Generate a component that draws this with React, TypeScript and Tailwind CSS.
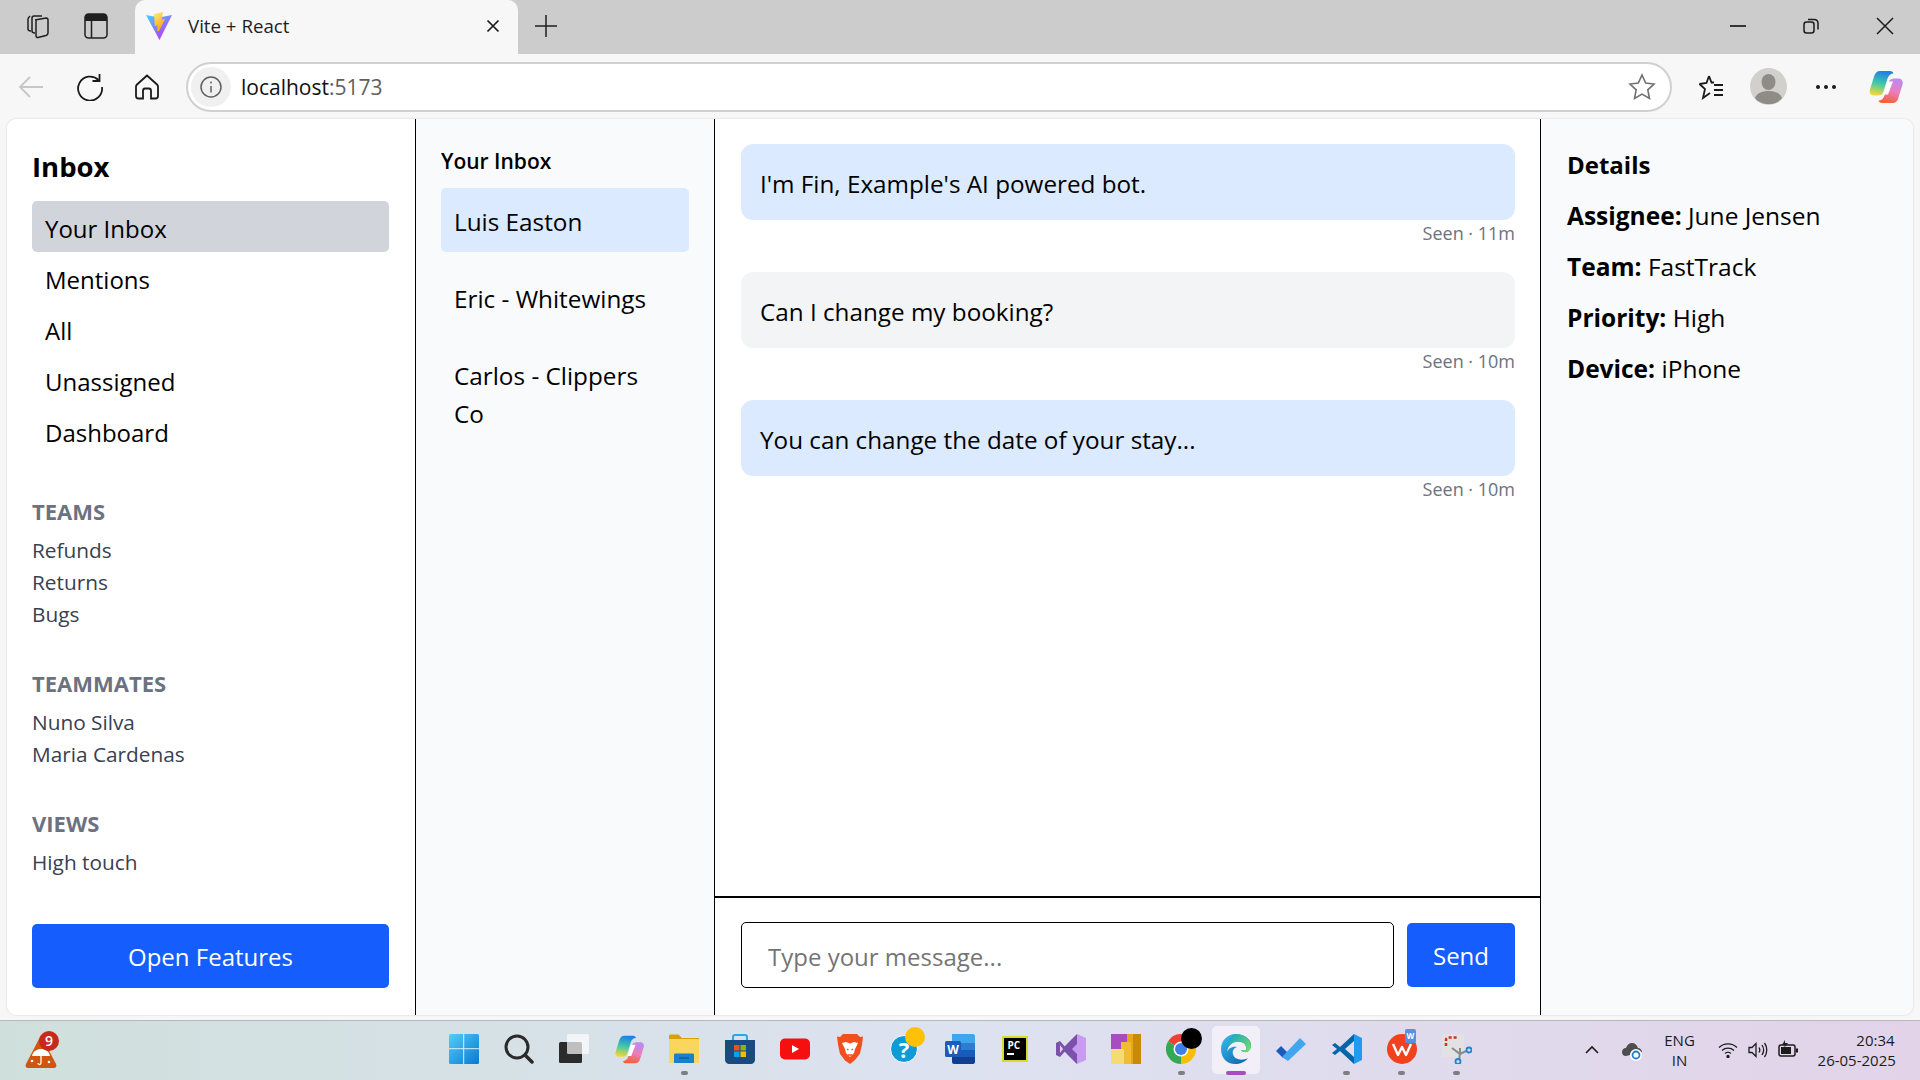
import React from "react";

const navItems = ["Your Inbox", "Mentions", "All", "Unassigned", "Dashboard"];

const sections = [
  { title: "TEAMS", items: ["Refunds", "Returns", "Bugs"], className: "mt-[40px]" },
  { title: "TEAMMATES", items: ["Nuno Silva", "Maria Cardenas"], className: "mt-[38px]" },
  { title: "VIEWS", items: ["High touch"], className: "mt-[38px]" },
];

const conversations = ["Luis Easton", "Eric - Whitewings", "Carlos - Clippers Co"];

const messages = [
  { text: "I'm Fin, Example's AI powered bot.", seen: "Seen · 11m", bg: "bg-[#dbeafe]" },
  { text: "Can I change my booking?", seen: "Seen · 10m", bg: "bg-[#f3f4f6]" },
  { text: "You can change the date of your stay...", seen: "Seen · 10m", bg: "bg-[#dbeafe]" },
];

const details = [
  { label: "Assignee:", value: "June Jensen" },
  { label: "Team:", value: "FastTrack" },
  { label: "Priority:", value: "High" },
  { label: "Device:", value: "iPhone" },
];

const CopilotLogo = ({ size = 36, id = "cp" }: { size?: number; id?: string }) => (
  <svg width={size} height={size} viewBox="0 0 36 36">
    <defs>
      <linearGradient id={`${id}A`} x1="0.5" y1="0" x2="0.3" y2="1">
        <stop offset="0" stopColor="#1f7fe6" />
        <stop offset="0.5" stopColor="#3fc8a8" />
        <stop offset="1" stopColor="#f9d835" />
      </linearGradient>
      <linearGradient id={`${id}B`} x1="0.7" y1="0" x2="0.4" y2="1">
        <stop offset="0" stopColor="#b98cf0" />
        <stop offset="0.5" stopColor="#ea7ec0" />
        <stop offset="1" stopColor="#f5602f" />
      </linearGradient>
    </defs>
    <path d="M12 2h10c2 0 3 1 3.500 2.500-3 0-5 2-6 5l-4 13c-1 3-3 4-6 4H6c-3.500 0-5-3-4-6l4-13C7 4 9 2 12 2z" fill={`url(#${id}A)`} />
    <path d="M24 34H14c-2 0-3-1-3.500-2.500 3 0 5-2 6-5l4-13c1-3 3-4 6-4h4c3.500 0 5 3 4 6l-4 13c-1 4-3 5.500-6.500 5.500z" fill={`url(#${id}B)`} />
    <path d="M19.500 12.500h5.500l-5 13h-4.500z" fill="#fff" />
  </svg>
);

const TabBar = () => (
  <div className="flex h-[54px] shrink-0 items-end bg-[#cccccc]">
    <div className="flex h-full w-[135px] items-center pb-[2px]">
      <svg className="ml-[25px]" width="26" height="26" viewBox="0 0 26 26" fill="none" stroke="#1f1f1f" strokeWidth="1.500">
        <path d="M10 7l11-2c1 0 2 .6 2 2v13c0 1-.6 2-2 2.500l-8 2c-1 .2-2-.5-2-2V9c0-1 0-2 1-2z" />
        <path d="M10 20c-2 0-3-1-3-2V5c0-1 1-2 2-2h8" />
        <path d="M6 18c-2 0-3-1-3-2V6c0-1 1-2 2-3" />
      </svg>
      <svg className="ml-[33px]" width="24" height="26" viewBox="0 0 24 26" fill="none">
        <rect x="1" y="1" width="22" height="24" rx="3.500" stroke="#1f1f1f" strokeWidth="1.500" />
        <path d="M1 4.500C1 2 2.500 1 4.500 1h15C21.500 1 23 2 23 4.500V8H1z" fill="#1f1f1f" />
        <path d="M7.500 8v17" stroke="#1f1f1f" strokeWidth="1.500" />
      </svg>
    </div>
    <div className="flex h-full w-[383px] items-center rounded-t-[10px] bg-[#f7f7f7] pb-[2px]">
      <svg className="ml-[11px]" width="26" height="30" viewBox="0 0 26 30">
        <defs>
          <linearGradient id="viteA" x1="0" y1="0" x2="0.7" y2="1">
            <stop offset="0" stopColor="#41d1ff" />
            <stop offset="1" stopColor="#bd34fe" />
          </linearGradient>
          <linearGradient id="viteB" x1="0" y1="0" x2="0.4" y2="1">
            <stop offset="0" stopColor="#ffea83" />
            <stop offset="1" stopColor="#ffa800" />
          </linearGradient>
        </defs>
        <path d="M0 4l13 2.500L26 4 13.500 29z" fill="url(#viteA)" />
        <path d="M17 1L8 3l.8 12 2.700-.6-.5 5.500 2 .2 6-12-3.400.7 1.400-7.800z" fill="url(#viteB)" />
      </svg>
      <span className="ml-[16px] w-[297px] text-[18.700px] text-[#1f1f1f]">Vite + React</span>
      <svg width="16" height="16" viewBox="0 0 16 16" stroke="#1a1a1a" strokeWidth="1.700">
        <path d="M2.500 2.500l11 11M13.500 2.500l-11 11" />
      </svg>
    </div>
    <div className="flex h-full flex-1 items-center pb-[2px]">
      <svg className="ml-[16px]" width="24" height="24" viewBox="0 0 24 24" stroke="#1f1f1f" strokeWidth="1.500">
        <path d="M12 1v22M1 12h22" />
      </svg>
      <div className="ml-auto flex items-center">
        <svg width="18" height="18" viewBox="0 0 18 18" stroke="#1a1a1a" strokeWidth="1.700">
          <path d="M1 9h16" />
        </svg>
        <svg className="ml-[55px]" width="18" height="18" viewBox="0 0 18 18" fill="none" stroke="#1a1a1a" strokeWidth="1.500">
          <rect x="2" y="5" width="10" height="11" rx="2.500" />
          <path d="M6 2.500h6c2.500 0 4 1.500 4 4v6" />
        </svg>
        <svg className="ml-[56px] mr-[26px]" width="18" height="18" viewBox="0 0 18 18" stroke="#1a1a1a" strokeWidth="1.500">
          <path d="M1 1l16 16M17 1L1 17" />
        </svg>
      </div>
    </div>
  </div>
);

const Toolbar = () => (
  <div className="flex h-[65px] shrink-0 items-center bg-[#f7f7f7]">
    <svg className="ml-[18px]" width="26" height="24" viewBox="0 0 26 24" fill="none" stroke="#c6c6c6" strokeWidth="1.800">
      <path d="M25 12H2M12 2L2 12l10 10" />
    </svg>
    <svg className="ml-[32px]" width="28" height="28" viewBox="0 0 28 28" fill="none" stroke="#1a1a1a" strokeWidth="1.800">
      <path d="M22.500 7A12 12 0 1 0 26 14" />
      <path d="M23.500 1v7h-7" />
    </svg>
    <svg className="ml-[31px]" width="24" height="26" viewBox="0 0 24 26" fill="none" stroke="#1a1a1a" strokeWidth="1.800">
      <path d="M12 1.500L2 10.500c-.6.6-1 1.200-1 2V22c0 1.500 1 2.500 2.500 2.500H8V17c0-1.500 1-2.500 2-2.500h4c1 0 2 1 2 2.500v7.500h4.500C22 24.500 23 23.500 23 22v-9.500c0-.8-.4-1.400-1-2z" />
    </svg>
    <div className="ml-[27px] flex h-[50px] w-[1486px] items-center rounded-full border-2 border-[#d0d0d0] bg-white">
      <div className="ml-[3px] flex h-[40px] w-[40px] items-center justify-center rounded-full bg-[#f0f0f0]">
        <svg width="24" height="24" viewBox="0 0 24 24" fill="none" stroke="#606060" strokeWidth="1.500">
          <circle cx="12" cy="12" r="10" />
          <path d="M12 11v6.500M12 6.500v2" />
        </svg>
      </div>
      <span className="ml-[10px] pt-[2px] text-[21px] text-[#111]">
        localhost<span className="text-[#5f5f5f]">:5173</span>
      </span>
      <svg className="ml-auto mr-[14px]" width="28" height="28" viewBox="0 0 28 28" fill="none" stroke="#707070" strokeWidth="1.600">
        <path d="M14 2l3.700 8 8.300 1-6.200 5.800 1.700 8.700-7.500-4.400-7.500 4.400 1.700-8.700L2 11l8.300-1z" />
      </svg>
    </div>
    <svg className="ml-[26px]" width="26" height="26" viewBox="0 0 26 26" fill="none" stroke="#1a1a1a" strokeWidth="1.800">
      <path d="M11 2l2.500 6.500H16M1.500 10l5.500 5-2 9 7-5" />
      <path d="M11 2L8.500 9 1.500 10" />
      <path d="M16 11h9M16 16h9M16 21h9" />
    </svg>
    <svg className="ml-[26px]" width="37" height="37" viewBox="0 0 37 37">
      <circle cx="18.500" cy="18.500" r="18.500" fill="#d1d0cc" />
      <ellipse cx="18.500" cy="14" rx="7" ry="8" fill="#8f8c87" />
      <path d="M5 30c2-5 7-7 13.500-7S30 25 32 30c-3 4-8 6-13.500 6S8 34 5 30z" fill="#8f8c87" />
    </svg>
    <svg className="ml-[28px]" width="22" height="6" viewBox="0 0 22 6" fill="#1a1a1a">
      <circle cx="3" cy="3" r="2" />
      <circle cx="11" cy="3" r="2" />
      <circle cx="19" cy="3" r="2" />
    </svg>
    <div className="ml-[31px]">
      <CopilotLogo id="cpTop" />
    </div>
  </div>
);

const Sidebar = () => (
  <aside className="flex w-[409px] shrink-0 flex-col border-r border-black bg-white pl-[25px] pr-[26px] pt-[28px]">
    <h1 className="text-[27.500px] font-bold leading-[40px] text-black">Inbox</h1>
    <nav className="mt-[14px]">
      {navItems.map((item, i) => (
        <div
          key={item}
          className={`h-[51px] rounded-[5px] px-[13px] text-[24px] leading-[55px] text-black ${i === 0 ? "bg-[#d1d5db]" : ""}`}
        >
          {item}
        </div>
      ))}
    </nav>
    {sections.map((s) => (
      <section key={s.title} className={s.className}>
        <h2 className="text-[22px] font-bold leading-[30px] text-[#6b7280]">{s.title}</h2>
        <ul className="mt-[8px]">
          {s.items.map((item) => (
            <li key={item} className="h-[32px] text-[20.800px] leading-[32px] text-[#374151]">
              {item}
            </li>
          ))}
        </ul>
      </section>
    ))}
    <button className="mb-[27px] mt-auto h-[64px] rounded-[5px] bg-[#155dfc] pt-[2px] text-[24px] text-white">Open Features</button>
  </aside>
);

const ConversationList = () => (
  <div className="w-[299px] shrink-0 border-r border-black bg-[#f9fafb] px-[25px] pt-[27px]">
    <h2 className="text-[21px] font-semibold leading-[30px] text-black">Your Inbox</h2>
    <div className="mt-[12px]">
      {conversations.map((c, i) => (
        <div
          key={c}
          className={`mb-[13px] rounded-[5px] pb-[11px] pl-[13px] pr-[24px] pt-[15px] text-[24.300px] leading-[38px] text-black ${i === 0 ? "bg-[#dbeafe]" : ""}`}
        >
          {c}
        </div>
      ))}
    </div>
  </div>
);

const Conversation = () => (
  <main className="flex min-w-0 flex-1 flex-col bg-white">
    <div className="flex-1 pl-[26px] pr-[25px] pt-[25px]">
      {messages.map((m) => (
        <div key={m.text} className="mb-[25px] h-[103px]">
          <div className={`flex h-[76px] items-center rounded-[12px] pl-[19px] pr-[20px] pt-[4px] text-[24.250px] text-black ${m.bg}`}>{m.text}</div>
          <div className="pt-[1px] text-right text-[18px] leading-[25px] text-[#6b7280]">{m.seen}</div>
        </div>
      ))}
    </div>
    <div className="flex h-[119px] shrink-0 items-start border-t-2 border-black pl-[26px] pr-[25px] pt-[24px]">
      <input
        className="h-[66px] min-w-0 flex-1 rounded-[5px] border border-black bg-white px-[26px] pt-[2px] text-[24px] outline-none placeholder:text-[#757575]"
        placeholder="Type your message..."
      />
      <button className="ml-[13px] mt-[1px] h-[64px] w-[108px] rounded-[5px] bg-[#155dfc] pt-[2px] text-[24px] text-white">Send</button>
    </div>
  </main>
);

const DetailsPanel = () => (
  <aside className="w-[373px] shrink-0 border-l border-black bg-[#f9fafb] pl-[26px] pt-[30px]">
    <h2 className="text-[24px] font-bold leading-[32px] text-black">Details</h2>
    {details.map((d) => (
      <p key={d.label} className="mt-[19px] text-[24.500px] leading-[32px] text-black">
        <strong className="font-bold">{d.label}</strong> {d.value}
      </p>
    ))}
  </aside>
);

const WeatherIcon = () => (
  <div className="relative h-[36px] w-[32px]">
    <svg width="32" height="36" viewBox="0 0 32 36">
      <path d="M16 1L1 30c-1 2 0 4 2 4h26c2 0 3-2 2-4z" fill="#cf5510" />
      <path d="M7 22c1-5 5-7 9-7s8 2 9 7z" fill="#fff" />
      <path d="M16 21v8c0 2-3 2-3 0" fill="none" stroke="#fff" strokeWidth="1.300" />
      <circle cx="7" cy="27" r="1.300" fill="#fff" />
      <circle cx="24" cy="28" r="1.300" fill="#fff" />
    </svg>
    <div className="absolute left-[14px] top-[-3px] flex h-[20px] w-[20px] items-center justify-center rounded-full bg-[#c9281c] text-[14px] font-semibold text-white">
      9
    </div>
  </div>
);

const StartIcon = () => (
  <svg width="30" height="30" viewBox="0 0 30 30">
    <defs>
      <linearGradient id="winA" x1="0" y1="0" x2="1" y2="1">
        <stop offset="0" stopColor="#55cdf7" />
        <stop offset="1" stopColor="#0778d4" />
      </linearGradient>
    </defs>
    <rect width="30" height="30" rx="1.500" fill="url(#winA)" />
    <path d="M14.700 0v30M0 14.700h30" stroke="#e0eef2" strokeWidth="1" />
  </svg>
);

const SearchIcon = () => (
  <svg width="30" height="30" viewBox="0 0 30 30" fill="none" stroke="#2a2a2a">
    <circle cx="13" cy="13" r="11" strokeWidth="3" />
    <path d="M21 21l7 7" strokeWidth="3.500" strokeLinecap="round" />
  </svg>
);

const TaskViewIcon = () => (
  <svg width="30" height="30" viewBox="0 0 30 30">
    <rect x="0" y="8" width="23" height="21" rx="1.500" fill="#2b2b2b" />
    <rect x="8" y="0" width="22" height="20" rx="1.500" fill="#fff" fillOpacity="0.7" />
  </svg>
);

const FilesIcon = () => (
  <svg width="30" height="30" viewBox="0 0 30 30">
    <path d="M0 2c0-1 .5-1.500 1.500-1.500h8L13 4h17v4H0z" fill="#d9a106" />
    <path d="M0 5h30v24H0z" fill="#fbd65c" />
    <path d="M5 21c0-1 .5-1.500 1.500-1.500h17c1 0 1.500.5 1.500 1.500v8H5z" fill="#1780cf" />
    <path d="M10 24h10" stroke="#0c5a9e" strokeWidth="1.300" />
  </svg>
);

const StoreIcon = () => (
  <svg width="30" height="30" viewBox="0 0 30 30">
    <path d="M8 8V3c0-1 1-2 2-2h10c1 0 2 1 2 2v5" fill="none" stroke="#28a8ea" strokeWidth="2" />
    <path d="M0 6h30v20c0 2-2 4-4 4H4c-2 0-4-2-4-4z" fill="#1a4b7f" />
    <rect x="9" y="11" width="5.500" height="5.500" fill="#f25022" />
    <rect x="15.500" y="11" width="5.500" height="5.500" fill="#7fba00" />
    <rect x="9" y="17.500" width="5.500" height="5.500" fill="#00a4ef" />
    <rect x="15.500" y="17.500" width="5.500" height="5.500" fill="#ffb900" />
  </svg>
);

const YoutubeIcon = () => (
  <svg width="30" height="22" viewBox="0 0 30 22">
    <rect width="30" height="21" y="0.500" rx="5" fill="#f50f0f" />
    <path d="M12 7l7 4-7 4z" fill="#fff" />
  </svg>
);

const BraveIcon = () => (
  <svg width="26" height="30" viewBox="0 0 26 30">
    <path d="M6 0h14l3 3 3-.5-1 8-2 9-5 6.500L13 30l-5-3.500L3 20 1 10.500 0 2.500 3 3z" fill="#f1501e" />
    <path d="M5 9l4-1 4 1.500L17 8l4 1-3 6-1 4-4 4-4-4-1-4z" fill="#fff" />
    <path d="M10 15l1.500 1M16 15l-1.500 1M11 21h4" stroke="#f1501e" strokeWidth="1.500" />
  </svg>
);

const HelpIcon = () => (
  <div className="relative h-[30px] w-[30px]">
    <div className="flex h-[28px] w-[28px] translate-y-[1px] items-center justify-center rounded-full border border-white bg-[#0f9bd7] text-[22px] font-bold leading-none text-white">
      ?
    </div>
    <div className="absolute left-[15px] top-[-7px] h-[20px] w-[20px] rounded-full bg-[#ffc107]" />
  </div>
);

const WordIcon = () => (
  <svg width="30" height="30" viewBox="0 0 30 30">
    <path d="M7 0h21c1 0 2 1 2 2v7H7z" fill="#41a5ee" />
    <rect x="7" y="9" width="23" height="7" fill="#2b7cd3" />
    <rect x="7" y="16" width="23" height="7" fill="#185abd" />
    <path d="M7 23h23v5c0 1-1 2-2 2H9c-1 0-2-1-2-2z" fill="#103f91" />
    <rect x="0" y="7" width="16" height="16" rx="1.500" fill="#1c5bb8" />
    <text x="8" y="20" textAnchor="middle" fontSize="12" fontWeight="700" fill="#fff" fontFamily="Open Sans">W</text>
  </svg>
);

const PyCharmIcon = () => (
  <div className="flex h-[26px] w-[26px] flex-col border-[2px] border-[#d6dc2e] bg-black px-[3px] pt-[2px] text-white">
    <span className="text-[10px] font-bold leading-[11px]">PC</span>
    <span className="mt-[2px] h-[1.500px] w-[7px] bg-white" />
  </div>
);

const VisualStudioIcon = () => (
  <svg width="30" height="30" viewBox="0 0 30 30">
    <path d="M21 0l9 4v22l-9 4-10-10V10z" fill="#c89bef" />
    <path d="M21 0L6 15l-3-2.500V18l3-3 15 15V20l-5-5 5-5z" fill="#7b52ab" />
    <path d="M0 9l4-2 7 8-7 8-4-2z" fill="#7b52ab" />
    <path d="M4 11l3 4-3 4z" fill="#e2d4e9" />
  </svg>
);

const PowerBiIcon = () => (
  <svg width="30" height="30" viewBox="0 0 30 30">
    <rect width="30" height="30" fill="#a64dbf" />
    <rect x="16" y="0" width="14" height="30" fill="#c98a0c" />
    <rect x="16" y="0" width="6" height="30" fill="#e6a818" />
    <rect x="10" y="8" width="10" height="22" fill="#eebd32" />
    <rect x="0" y="15" width="13" height="15" fill="#f5dc72" />
  </svg>
);

const ChromeIcon = () => (
  <div className="relative h-[30px] w-[30px]">
    <svg width="30" height="30" viewBox="0 0 30 30">
      <path d="M15 15L2 7.500A15 15 0 0 1 28 7.500z" fill="#ea4335" />
      <path d="M15 15L2 7.500A15 15 0 0 0 15 30z" fill="#34a853" />
      <path d="M15 15l13-7.500A15 15 0 0 1 15 30z" fill="#fbbc04" />
      <circle cx="15" cy="15" r="7.500" fill="#fff" />
      <circle cx="15" cy="15" r="6" fill="#3f7fe8" />
    </svg>
    <div className="absolute left-[15px] top-[-6px] h-[21px] w-[21px] rounded-full bg-black" />
  </div>
);

const EdgeIcon = () => (
  <svg width="30" height="30" viewBox="0 0 30 30">
    <defs>
      <linearGradient id="edgeA" x1="0" y1="0" x2="1" y2="1">
        <stop offset="0" stopColor="#35c1f1" />
        <stop offset="1" stopColor="#0c59a4" />
      </linearGradient>
      <linearGradient id="edgeB" x1="0" y1="0" x2="1" y2="0.800">
        <stop offset="0" stopColor="#1ba0c9" />
        <stop offset="1" stopColor="#6fdc6b" />
      </linearGradient>
    </defs>
    <path d="M15 0C6 0 0 7 0 15c0 9 6 15 14 15 5 0 10-2 13-6-5 3-14 2-15-4-1-3 1-6 4-7-5-1-9 2-10 5C7 10 14 6 20 8c4 1 6 4 5 8h-5c1 2 4 2 6 2 2-1 4-4 4-7C30 5 23 0 15 0z" fill="url(#edgeA)" />
    <path d="M15 0c8 0 15 5 15 12 0 3-2 5.500-4 6-2 .5-5 0-6-2h5c1-4-1-7-5-8-4-1-9 0-12 4 1-6 3-12 7-12z" fill="url(#edgeB)" />
  </svg>
);

const TodoIcon = () => (
  <svg width="30" height="24" viewBox="0 0 30 24">
    <path d="M0 14l5-5 7 7-5 5z" fill="#1a5bc0" />
    <path d="M6 20L24 1l6 6-18 17z" fill="#42a5f0" />
  </svg>
);

const VscodeIcon = () => (
  <svg width="30" height="30" viewBox="0 0 30 30">
    <path d="M22 0l8 4v22l-8 4z" fill="#1f9cf0" />
    <path d="M22 0L8 13 3 9 0 11l5 4-5 4 3 2 5-4 14 13v-7l-9-8 9-8z" fill="#0065a9" />
  </svg>
);

const WpsIcon = () => (
  <div className="relative h-[30px] w-[30px]">
    <svg width="30" height="30" viewBox="0 0 30 30">
      <circle cx="15" cy="15" r="15" fill="#f0421c" />
      <path d="M6 10l5 11 4-8 4 8 5-11" fill="none" stroke="#fff" strokeWidth="2.400" strokeLinejoin="round" />
    </svg>
    <div className="absolute left-[18px] top-[-5px] flex h-[14px] w-[11px] items-center justify-center rounded-[2px] bg-[#5b8fe0] text-[8px] font-bold text-white">W</div>
  </div>
);

const SnipIcon = () => (
  <svg width="30" height="30" viewBox="0 0 30 30">
    <rect x="0" y="0" width="22" height="23" rx="2" fill="#e2e2e2" />
    <path d="M4 12V6c0-1.500 1-2.500 2.500-2.500H16" fill="none" stroke="#c9331f" strokeWidth="2.500" strokeDasharray="3 2" />
    <path d="M10 14l8 6 6-3M18 14l0 6-1 6" fill="none" stroke="#8a8a8a" strokeWidth="2" />
    <circle cx="27" cy="16" r="2.500" fill="none" stroke="#1a86d8" strokeWidth="1.800" />
    <circle cx="16" cy="27.500" r="2.500" fill="none" stroke="#1a86d8" strokeWidth="1.800" />
  </svg>
);

const taskbarApps = [
  { id: "start", icon: <StartIcon /> },
  { id: "search", icon: <SearchIcon /> },
  { id: "taskview", icon: <TaskViewIcon /> },
  { id: "copilot", icon: <CopilotLogo size={31} id="cpBar" /> },
  { id: "files", icon: <FilesIcon />, running: true },
  { id: "store", icon: <StoreIcon /> },
  { id: "youtube", icon: <YoutubeIcon /> },
  { id: "brave", icon: <BraveIcon /> },
  { id: "help", icon: <HelpIcon /> },
  { id: "word", icon: <WordIcon /> },
  { id: "pycharm", icon: <PyCharmIcon /> },
  { id: "vs", icon: <VisualStudioIcon /> },
  { id: "powerbi", icon: <PowerBiIcon /> },
  { id: "chrome", icon: <ChromeIcon />, running: true },
  { id: "edge", icon: <EdgeIcon />, active: true },
  { id: "todo", icon: <TodoIcon /> },
  { id: "vscode", icon: <VscodeIcon />, running: true },
  { id: "wps", icon: <WpsIcon />, running: true },
  { id: "snip", icon: <SnipIcon />, running: true },
];

const Taskbar = () => (
  <footer className="flex h-[60px] shrink-0 items-center border-t border-[#b5b8bb] bg-gradient-to-r from-[#cfe0dc] via-[#dde2f0] to-[#e2d3e9]">
    <div className="w-[436px] shrink-0 pl-[25px] pt-[2px]">
      <WeatherIcon />
    </div>
    <div className="flex h-full shrink-0">
      {taskbarApps.map((app) => (
        <div key={app.id} className="relative flex h-full w-[55.200px] items-center justify-center pb-[3px]">
          {app.active && <div className="absolute left-[3px] top-[5px] h-[48px] w-[48px] rounded-[5px] bg-[#f3eff9]" />}
          <div className="relative">{app.icon}</div>
          {app.running && <div className="absolute bottom-[5px] h-[4px] w-[7px] rounded-full bg-[#7d7d82]" />}
          {app.active && <div className="absolute bottom-[5px] h-[4px] w-[20px] rounded-full bg-[#a64dbf]" />}
        </div>
      ))}
    </div>
    <div className="flex flex-1 items-center pb-[2px] pl-[100px] text-[#1c1c1c]">
      <svg width="14" height="9" viewBox="0 0 14 9" fill="none" stroke="#1c1c1c" strokeWidth="1.600">
        <path d="M1 8l6-6 6 6" />
      </svg>
      <svg className="ml-[22px]" width="22" height="22" viewBox="0 0 22 22">
        <path d="M5 17c-3 0-4-2-4-4s1.500-4 4-4c1-3 3-5 6-5s5 2 6 5c2 0 4 2 4 4" fill="#4e4e4e" />
        <circle cx="15" cy="16" r="6" fill="#fff" />
        <circle cx="15" cy="16" r="3.500" fill="none" stroke="#1a7dd8" strokeWidth="1.800" />
      </svg>
      <div className="ml-[21px] w-[32px] text-center text-[15px] leading-[20px]">
        <div>ENG</div>
        <div>IN</div>
      </div>
      <svg className="ml-[22px]" width="20" height="16" viewBox="0 0 20 16" fill="none" stroke="#1c1c1c" strokeWidth="1.300">
        <path d="M1 5.500a13 13 0 0 1 18 0M4 8.500a9 9 0 0 1 12 0M7 11.500a4.500 4.500 0 0 1 6 0" />
        <circle cx="10" cy="14.500" r="1" fill="#1c1c1c" />
      </svg>
      <svg className="ml-[10px]" width="20" height="20" viewBox="0 0 20 20" fill="none" stroke="#1c1c1c" strokeWidth="1.300">
        <path d="M1 7.500h3l4-4v13l-4-4H1zM11 7.500c1 1.500 1 3.500 0 5M14 5c2 3 2 7 0 10M16.500 3c3 4 3 10 0 14" />
      </svg>
      <svg className="ml-[10px]" width="20" height="20" viewBox="0 0 20 20">
        <rect x="1" y="5" width="16" height="11" rx="2" fill="none" stroke="#1c1c1c" strokeWidth="1.500" />
        <rect x="3" y="7" width="10" height="7" fill="#1c1c1c" />
        <rect x="18" y="8.500" width="2" height="4" fill="#1c1c1c" />
        <path d="M7 0L4 5h3l-1 3 4-5H7z" fill="#1c1c1c" />
      </svg>
      <div className="ml-[20px] w-[77px] whitespace-nowrap text-right text-[15px] leading-[20px]">
        <div>20:34</div>
        <div>26-05-2025</div>
      </div>
    </div>
  </footer>
);

const App: React.FC = () => {
  return (
    <div className="flex h-screen w-full flex-col overflow-hidden bg-[#f7f7f7] font-['Open_Sans',sans-serif]">
      <TabBar />
      <Toolbar />
      <div className="flex min-h-0 flex-1 px-[7px] pb-[5px]">
        <div className="flex min-w-0 flex-1 overflow-hidden rounded-[9px] shadow-[0_0_2px_rgba(0,0,0,0.2)]">
          <Sidebar />
          <ConversationList />
          <Conversation />
          <DetailsPanel />
        </div>
      </div>
      <Taskbar />
    </div>
  );
};

export default App;
